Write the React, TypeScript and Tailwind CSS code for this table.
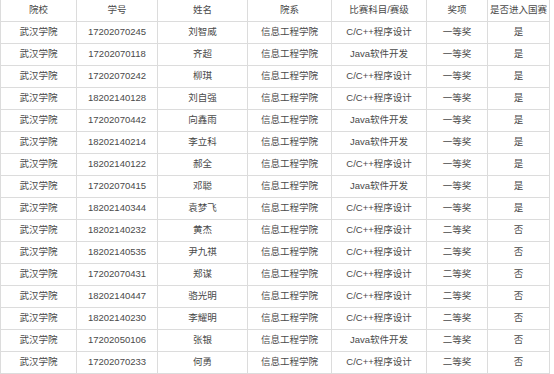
import { Fragment } from "react";

const headers = ["院校", "学号", "姓名", "院系", "比赛科目/赛级", "奖项", "是否进入国赛"];

const CPP = "C/C++程序设计";
const JAVA = "Java软件开发";

const rows: [string, string, string, string, string][] = [
  ["17202070245", "刘智威", CPP, "一等奖", "是"],
  ["17202070118", "齐超", JAVA, "一等奖", "是"],
  ["17202070242", "柳琪", CPP, "一等奖", "是"],
  ["18202140128", "刘自强", CPP, "一等奖", "是"],
  ["17202070442", "向鑫雨", JAVA, "一等奖", "是"],
  ["18202140214", "李立科", JAVA, "一等奖", "是"],
  ["18202140122", "郝全", CPP, "一等奖", "是"],
  ["17202070415", "邓聪", JAVA, "一等奖", "是"],
  ["18202140344", "袁梦飞", CPP, "一等奖", "是"],
  ["18202140232", "黄杰", CPP, "二等奖", "否"],
  ["18202140535", "尹九祺", CPP, "二等奖", "否"],
  ["17202070431", "郑谋", CPP, "二等奖", "否"],
  ["18202140447", "骆光明", CPP, "二等奖", "否"],
  ["18202140230", "李耀明", CPP, "二等奖", "否"],
  ["17202050106", "张银", JAVA, "二等奖", "否"],
  ["17202070233", "何勇", CPP, "二等奖", "否"],
];

function Cell({ children }: { children: React.ReactNode }) {
  return (
    <div className="h-[22px] flex items-center justify-center border-r border-b border-[#dcdcdc] whitespace-nowrap overflow-hidden">
      {children}
    </div>
  );
}

export default function App() {
  return (
    <div className="w-[554px] h-[374px] bg-white overflow-hidden">
      <div
        className="grid grid-cols-[76px_81px_90px_84px_95px_61px_62px] w-[550px] border-l border-[#dcdcdc] text-[9.5px] text-[#4a4a4a]"
        style={{ fontFamily: '"Liberation Sans", "Noto Sans CJK SC", sans-serif' }}
      >
        {headers.map((h) => (
          <Cell key={h}>{h}</Cell>
        ))}
        {rows.map((r) => (
          <Fragment key={r[0]}>
            <Cell>武汉学院</Cell>
            <Cell>{r[0]}</Cell>
            <Cell>{r[1]}</Cell>
            <Cell>信息工程学院</Cell>
            <Cell>{r[2]}</Cell>
            <Cell>{r[3]}</Cell>
            <Cell>{r[4]}</Cell>
          </Fragment>
        ))}
      </div>
    </div>
  );
}
